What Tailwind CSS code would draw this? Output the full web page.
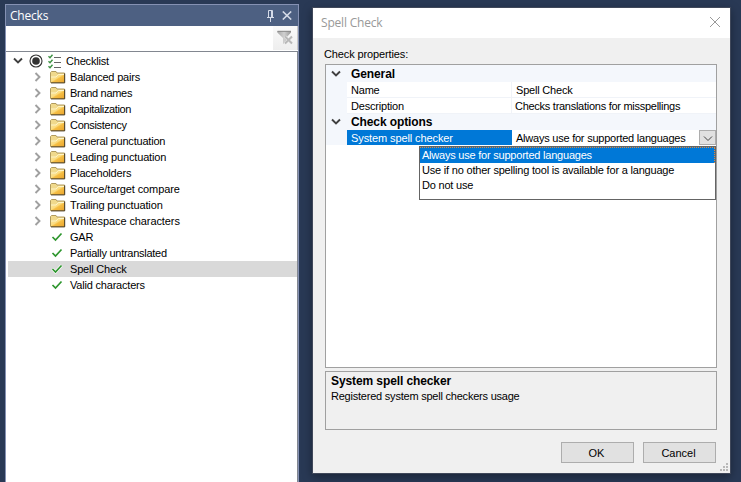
<!DOCTYPE html>
<html lang="en">
<head>
<meta charset="utf-8">
<title>Spell Check</title>
<script src="https://cdn.jsdelivr.net/npm/@tailwindcss/browser@4"></script>
</head>
<body class="flex h-[482px] w-[741px] items-start overflow-hidden bg-[#293955] text-[11px] leading-4 tracking-[-0.2px] whitespace-nowrap text-black font-['Liberation_Sans',Arial,sans-serif]">
<svg class="absolute h-0 w-0">
  <defs>
    <linearGradient id="gold" x1="0" y1="0" x2="1" y2="1"><stop offset="0" stop-color="#ffe9a0"/><stop offset=".45" stop-color="#fbdc80"/><stop offset=".55" stop-color="#f6bf45"/><stop offset="1" stop-color="#e9a42e"/></linearGradient>
    <linearGradient id="steel" x1="0" y1="0" x2="1" y2="0"><stop offset="0" stop-color="#a8a8a8"/><stop offset=".5" stop-color="#d0d0d0"/><stop offset="1" stop-color="#999"/></linearGradient>
    <symbol id="folder" viewBox="0 0 16 14"><path d="M.5 12.5V2.5L1.5 1.5H6L7 3H14.5V12.5Z" fill="#f0d98c" stroke="#b09a5e"/><path d="M1 12.5V7.5H6L8.5 4.5H14V12.5Z" fill="url(#gold)"/><path d="M1 7H6L8.3 4.5H14" fill="none" stroke="#fff5c8"/><path d="M1 12.9H14.7V3.5" fill="none" stroke="#4a3c22"/></symbol>
    <symbol id="right" viewBox="0 0 8 10"><path d="M1.5 1 5.5 5 1.5 9" fill="none" stroke="#a0a0a0" stroke-width="1.9"/></symbol>
    <symbol id="down" viewBox="0 0 10 8"><path d="M1 1.5 5 5.5 9 1.5" fill="none" stroke="#404040" stroke-width="1.9"/></symbol>
    <symbol id="tick" viewBox="0 0 12 10"><path d="M1.5 5 4.5 8 10.5 1.5" fill="none" stroke="#fff" stroke-width="3"/><path d="M1.5 5 4.5 8 10.5 1.5" fill="none" stroke="#2e962e" stroke-width="1.7"/></symbol>
  </defs>
</svg>

<section class="mt-1 ml-[5px] flex h-[478px] w-[294px] flex-none flex-col border border-b-0 border-[#8591b3] bg-white">
  <header class="flex h-[21px] flex-none items-center bg-[#4d6082] pl-1 text-[12px] text-white font-['Open_Sans','Noto_Sans',sans-serif]">
    <span class="grow">Checks</span>
    <svg class="mr-[8px] h-[12px] w-[7px]" viewBox="0 0 7 12" fill="none" stroke="#d5dbe8"><path d="M1.5 7V.5H5.5V7M4.5 1V7M0 7.5H7M3.5 8V12"/></svg>
    <svg class="mr-[6px] h-[9px] w-[10px]" viewBox="0 0 10 9" fill="none" stroke="#d5dbe8" stroke-width="1.6"><path d="M.8.5 9.2 8.5M9.2.5.8 8.5"/></svg>
  </header>
  <div class="flex h-[25px] flex-none justify-end">
    <div class="h-[24px] w-[25px] border-r border-[#c8c8c8] bg-gradient-to-b from-[#fafafa] to-[#eeeeee] pt-[4px] pl-1">
      <svg class="h-4 w-4" viewBox="0 0 16 16"><path d="M.3 1H14V2.5L9 8V12L6 14V8L.3 2.5Z" fill="url(#steel)"/><path d="M.5 1.3H14" stroke="#888"/><path d="M8 6.5 15 13.5M15 6.5 8 13.5" stroke="#ececec" stroke-width="3"/><path d="M8 6.5 15 13.5M15 6.5 8 13.5" stroke="#b8b8b8" stroke-width="1.9"/></svg>
    </div>
  </div>
  <div class="flex grow flex-col border-t border-r border-[#828790] pt-px">
    <div class="flex h-4 items-center pl-[7px]">
      <svg class="h-2 w-[10px]"><use href="#down"/></svg>
      <svg class="ml-[6px] h-[14px] w-[14px]" viewBox="0 0 14 14"><circle cx="7" cy="7" r="6" fill="#fff" stroke="#333" stroke-width="1.1"/><circle cx="7" cy="7" r="3.8" fill="#333"/></svg>
      <svg class="ml-[5px] h-[15px] w-[14px]" viewBox="0 0 14 15" fill="none"><path d="M6 3.5H13M6 8.5H13M6 13.5H13" stroke="#666"/><path d="M.5 2.3 2 3.8 4.5.7M.5 7.3 2 8.8 4.5 5.7M.5 12.3 2 13.8 4.5 10.7" stroke="#3d9143" stroke-width="1.4"/></svg>
      <span class="ml-[4px]">Checklist</span>
    </div>
    <div id="folders"></div>
    <div id="checks"></div>
  </div>
</section>

<section class="relative mt-[7px] ml-[13px] flex h-[467px] w-[419px] flex-none flex-col border border-[#40485a] bg-[#f0f0f0] shadow-[0_3px_9px_rgba(0,0,0,.35)]">
  <header class="flex h-[30px] flex-none items-center bg-white pl-2 text-[12px] text-[#999] font-['Open_Sans','Noto_Sans',sans-serif]">
    <span class="grow">Spell Check</span>
    <svg class="mr-[10px] mb-[2px] h-[10px] w-[10px]" viewBox="0 0 10 10" stroke="#999"><path d="M0 0 10 10M10 0 0 10"/></svg>
  </header>
  <div class="flex grow flex-col px-[12px]">
    <div class="-ml-px h-[26px] pt-[8px] tracking-[-0.12px]">Check properties:</div>
    <div class="relative h-[304px] w-[392px] border border-[#a0a0a0] bg-white">
      <div class="flex h-[17px] items-center bg-[#f4f7fc] pl-[5px] text-[12px] font-bold tracking-[-0.1px]"><svg class="h-2 w-[10px]"><use href="#down"/></svg><span class="ml-[10px]">General</span></div>
      <div class="grid h-8 grid-cols-[21px_165px_1fr]">
        <div class="row-span-2 bg-[#f4f7fc]"></div>
        <div class="h-4 border-r border-b border-[#f0f3f8] pl-1">Name</div><div class="h-4 border-b border-[#f0f3f8] pl-1">Spell Check</div>
        <div class="h-4 border-r border-b border-[#f0f3f8] pl-1">Description</div><div class="h-4 border-b border-[#f0f3f8] pl-[3px] tracking-[-0.27px]">Checks translations for misspellings</div>
      </div>
      <div class="flex h-4 items-center bg-[#f4f7fc] pl-[5px] text-[12px] font-bold tracking-[-0.1px]"><svg class="h-2 w-[10px]"><use href="#down"/></svg><span class="ml-[10px]">Check options</span></div>
      <div class="flex h-[15px]">
        <div class="w-[21px] bg-[#f4f7fc]"></div>
        <div class="w-[165px] bg-[#0078d7] pl-1 tracking-[-0.1px] text-white">System spell checker</div>
        <div class="grow pl-1 tracking-[-0.23px]">Always use for supported languages</div>
        <div class="flex w-[17px] items-center justify-center border border-[#adadad] bg-[#e1e1e1]"><svg class="mt-[3px] h-[6px] w-[10px]" viewBox="0 0 10 6" fill="none" stroke="#444"><path d="M1 .5 5 4.5 9 .5"/></svg></div>
      </div>
      <div class="absolute top-[81px] left-[93px] h-[54px] w-[297px] border border-[#646464] bg-white leading-[15px]">
        <div class="h-4 border border-b-0 border-l-0 border-dotted border-[#e08a3c] bg-[#0078d7] pl-[2px] tracking-[-0.22px] text-white">Always use for supported languages</div>
        <div class="h-[15px] pl-[2px]">Use if no other spelling tool is available for a language</div>
        <div class="h-[15px] pl-[2px]">Do not use</div>
      </div>
    </div>
    <div class="mt-[3px] h-[59px] w-[392px] border border-[#a0a0a0] pt-px pl-[5px]">
      <div class="h-[15px] text-[12px] font-bold tracking-[-0.1px]">System spell checker</div>
      <div class="tracking-[-0.22px]">Registered system spell checkers usage</div>
    </div>
    <div class="mt-[12px] flex gap-[9px] pl-[236px] tracking-normal">
      <div class="flex h-[21px] w-[73px] items-center justify-center border border-[#adadad] bg-[#e1e1e1] pr-[2px]">OK</div>
      <div class="flex h-[21px] w-[73px] items-center justify-center border border-[#adadad] bg-[#e1e1e1] pr-[2px]">Cancel</div>
    </div>
  </div>
  <svg class="absolute right-[2px] bottom-[2px] h-2 w-2" viewBox="0 0 8 8" fill="#b8b8b8"><path d="M6 0h2v2H6zM3 3h2v2H3zM6 3h2v2H6zM0 6h2v2H0zM3 6h2v2H3zM6 6h2v2H6z"/></svg>
</section>
<script>
const folders = [["Balanced pairs"],["Brand names","tracking-[-0.3px]"],["Capitalization","tracking-[-0.35px]"],["Consistency","tracking-[-0.3px]"],["General punctuation"],["Leading punctuation","tracking-[-0.15px]"],["Placeholders"],["Source/target compare","tracking-[-0.1px]"],["Trailing punctuation","tracking-[-0.15px]"],["Whitespace characters","tracking-[-0.1px]"]];
document.getElementById("folders").innerHTML = folders.map(([t, c = ""]) => `<div class="flex h-4 items-center pl-[28px]"><svg class="h-[10px] w-[8px]"><use href="#right"/></svg><svg class="ml-[8px] h-[14px] w-4"><use href="#folder"/></svg><span class="ml-[4px] ${c}">${t}</span></div>`).join("");
const checks = [["GAR"],["Partially untranslated","tracking-[-0.27px]"],["Spell Check"],["Valid characters"]];
document.getElementById("checks").innerHTML = checks.map(([t, c = ""]) => `<div class="ml-[2px] flex h-4 items-center pl-[43px] ${t === "Spell Check" ? "bg-[#d9d9d9]" : ""}"><svg class="h-[10px] w-[12px]"><use href="#tick"/></svg><span class="ml-[7px] ${c}">${t}</span></div>`).join("");
</script>
</body>
</html>
